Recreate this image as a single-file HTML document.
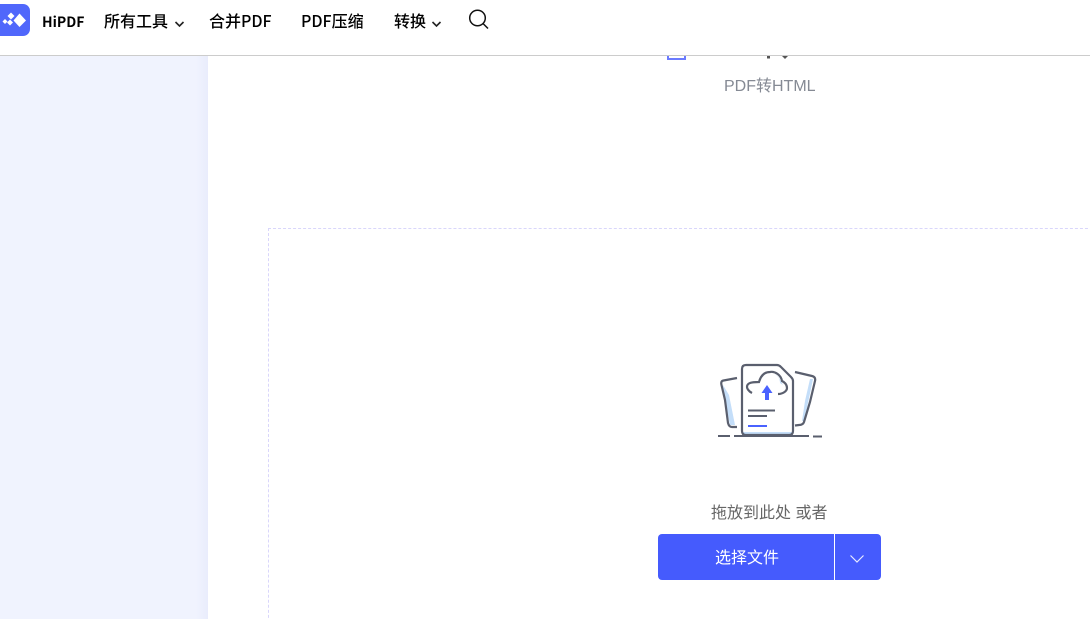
<!DOCTYPE html>
<html lang="zh">
<head>
<meta charset="utf-8">
<title>PDF转HTML</title>
<style>
html,body{margin:0;padding:0;width:1090px;height:619px;overflow:hidden;background:#fff}
body{position:relative;font-family:"Noto Sans CJK SC","Liberation Sans",sans-serif}
.abs{position:absolute;white-space:nowrap}
.nav{font-size:16px;font-weight:500;color:#000;line-height:22px;top:9px}
.lib{font-family:"Liberation Sans","Noto Sans CJK SC",sans-serif;font-size:16px;line-height:22px}
</style>
</head>
<body>
<!-- sidebar -->
<div class="abs" style="left:0;top:56px;width:208px;height:563px;background:linear-gradient(90deg,#f0f3fe 0,#f0f3fe 196px,#e9ecfc 208px)"></div>

<!-- header -->
<div class="abs" style="left:0;top:0;width:1090px;height:55px;background:#fff;border-bottom:1px solid #ccc"></div>

<!-- fragments of scrolled icon -->
<svg class="abs" style="left:660px;top:56px" width="130" height="5" viewBox="0 0 130 5">
<path d="M8 0V3H25V0" fill="none" stroke="#6b7bff" stroke-width="2"/>
<rect x="107" y="0" width="3" height="2.500" fill="#555"/>
<path d="M122 0h6l-3 3z" fill="#555"/>
</svg>

<svg class="abs" style="left:0;top:4px" width="30" height="32" viewBox="0 0 30 32">
<path d="M0 0H23a7 7 0 0 1 7 7V25a7 7 0 0 1-7 7H0z" fill="#5067fb"/>
<path d="M19.500 9.500L26 16.500l-6.500 6.500L13.500 16.500z" fill="#fff"/>
<path d="M11 8.500l3.500 3.500-3.500 3.500L7.500 12z" fill="#fff"/>
<path d="M5 15l2.500 2.500L5 20 2.500 17.500z" fill="#fff"/>
<path d="M10 15.500l3 3-3 3-3-3z" fill="#fff"/>
</svg>
<div class="abs" style="left:42px;top:11px;font-size:14px;font-weight:700;line-height:22px;color:#000">HiPDF</div>
<div class="abs nav" style="left:104px">所有工具</div>
<svg class="abs" style="left:174px;top:20px" width="11" height="9" viewBox="0 0 11 9"><path d="M1.500 2L5.500 6L9.500 2" fill="none" stroke="#222" stroke-width="1.600"/></svg>
<div class="abs nav" style="left:209px">合并PDF</div>
<div class="abs nav" style="left:301px">PDF压缩</div>
<div class="abs nav" style="left:394px">转换</div>
<svg class="abs" style="left:431px;top:20px" width="11" height="9" viewBox="0 0 11 9"><path d="M1.500 2L5.500 6L9.500 2" fill="none" stroke="#222" stroke-width="1.600"/></svg>
<svg class="abs" style="left:467px;top:8px" width="24" height="22" viewBox="0 0 24 22">
<circle cx="10.500" cy="10" r="7.800" fill="none" stroke="#111" stroke-width="1.500"/>
<path d="M16 15.500L21 20.500" stroke="#111" stroke-width="1.500" fill="none"/>
</svg>

<div class="abs lib" style="left:724px;top:76px;color:#858a94">PDF转HTML</div>

<!-- drop zone -->
<div class="abs" style="left:268px;top:228px;width:840px;height:420px;border:1px dashed #d9d6fb;box-sizing:border-box"></div>

<!-- upload illustration -->
<svg class="abs" style="left:705px;top:355px" width="125" height="90" viewBox="0 0 125 90">
<path d="M18 30L24 40L30 70L25 70L20 45z" fill="#c4def9"/>
<path d="M105 24L108 24L103 48L99 66L97 66L100 46z" fill="#c4def9"/>
<path d="M37 77H88V79Q88 80 85 80H40Q37 80 37 79z" fill="#c4def9"/>
<path d="M69 19C73 21 75 24 75 28L78 30C75 25 74 21 69 19z" fill="#c4def9"/>
<path d="M32 23L18.500 25.500Q15.500 26 16.500 30L20 45L23 68Q24 72 27 72L32 72" fill="none" stroke="#5a5f6e" stroke-width="2.200"/>
<path d="M90 17L107 21Q111 22 110 26L105 47L99 67Q98 70 94 70L90 70.500" fill="none" stroke="#5a5f6e" stroke-width="2.200"/>
<path d="M41 10H72Q74 10 76 12L86 22Q88 24 88 26V76Q88 80 84 80H41Q37 80 37 76V14Q37 10 41 10z" fill="none" stroke="#5a5f6e" stroke-width="2.200"/>
<path d="M47 38C43 36 42 33 42 32C42 28 46 27 54 27C56 20 60 17 65 17C70 16 76 20 77 26C81 28 82 31 82 33C82 36 78 39 73 39" fill="none" stroke="#5a5f6e" stroke-width="2.200"/>
<path d="M62 30L67.500 38H64V45H60V38H56.500z" fill="#4a62ff"/>
<path d="M43 55.500H70M43 61H62" stroke="#5a5f6e" stroke-width="2" fill="none"/>
<path d="M43 71H62" stroke="#4a62ff" stroke-width="2" fill="none"/>
<path d="M13 81H25M29 81H104" stroke="#5a5f6e" stroke-width="2" fill="none"/>
<path d="M108 81.500H117" stroke="#5a5f6e" stroke-width="2" fill="none"/>
</svg>

<div class="abs lib" style="left:711px;top:503px;color:#666">拖放到此处 或者</div>

<!-- button -->
<div class="abs" style="left:658px;top:534px;width:223px;height:46px;background:#455bfd;border-radius:4px"></div>
<div class="abs" style="left:834px;top:534px;width:1px;height:46px;background:#fff"></div>
<div class="abs" style="left:659px;top:533px;width:176px;height:46px;line-height:46px;text-align:center;font-size:16px;color:#fff">选择文件</div>
<svg class="abs" style="left:849px;top:553px" width="16" height="11" viewBox="0 0 16 11"><path d="M1.500 2.500L8 9L14.500 2.500" fill="none" stroke="#e8ebff" stroke-width="1.200"/></svg>
</body>
</html>
